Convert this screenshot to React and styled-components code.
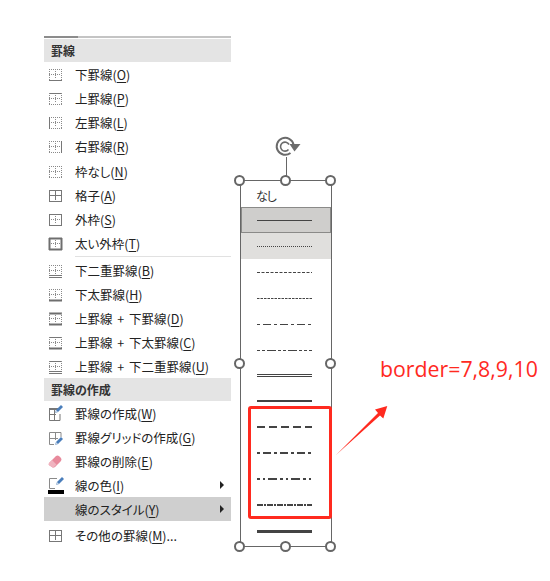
import React from "react";
import styled, { createGlobalStyle } from "styled-components";

const GlobalStyle = createGlobalStyle`
  html, body {
    margin: 0;
    background: #fff;
  }
`;

const FONT = `"Noto Sans CJK JP", "Noto Sans", sans-serif`;

const BorderIcon = ({ top, bottom, left, right, solid }) => {
  const dotted = { stroke: "#8a8a8a", strokeWidth: 1, strokeDasharray: "1 1" };
  const line = { stroke: "#777", strokeWidth: 1 };
  const thick = { stroke: "#6e6e6e", strokeWidth: 2 };
  const edge = (kind, x1, y1, x2, y2) => {
    if (kind === "thick") return <line x1={x1} y1={y1} x2={x2} y2={y2} {...thick} />;
    if (kind === "thin") return <line x1={x1} y1={y1} x2={x2} y2={y2} {...line} />;
    return <line x1={x1} y1={y1} x2={x2} y2={y2} {...dotted} />;
  };
  return (
    <svg width="16" height="16" viewBox="0 0 16 16" fill="none">
      <line x1="8.5" y1="3" x2="8.5" y2="13" {...(solid ? line : dotted)} />
      <line x1="2" y1="8.5" x2="14" y2="8.5" {...(solid ? line : dotted)} />
      {edge(top, 2, 3.5, 15, 3.5)}
      {bottom !== "double" && edge(bottom, 2, 14.5, 15, 14.5)}
      {edge(left, 2.5, 3, 2.5, 15)}
      {edge(right, 14.5, 3, 14.5, 15)}
      {bottom === "double" && (
        <>
          <line x1="2" y1="13.5" x2="15" y2="13.5" {...line} />
          <line x1="2" y1="15.5" x2="15" y2="15.5" {...line} />
        </>
      )}
    </svg>
  );
};

const Pencil = ({ x = 0, y = 0 }) => (
  <g transform={`translate(${x} ${y})`}>
    <path d="M0 8 L1 5 L6 0 L8 2 L3 7 Z" fill="#4a7ebb" />
    <path d="M0 8 L1 5 L3 7 Z" fill="#c9d6e6" />
  </g>
);

const DrawIcon = () => (
  <svg width="16" height="16" viewBox="0 0 16 16" fill="none">
    <path d="M2.5 3.5 H11 M2.5 3.5 V15.5 H13 V9 M7.5 4 V15 M3 9.5 H9" stroke="#777" />
    <rect x="2" y="3" width="9" height="2" fill="#777" />
    <Pencil x={8} y={0} />
  </svg>
);

const GridDrawIcon = () => (
  <svg width="16" height="16" viewBox="0 0 16 16" fill="none">
    <path d="M2.5 3.5 H14 V8 M2.5 3.5 V15.5 H7 M8.5 4 V11 M3 9.5 H11" stroke="#8a8a8a" />
    <Pencil x={8} y={8} />
  </svg>
);

const EraserIcon = () => (
  <svg width="16" height="16" viewBox="0 0 16 16">
    <path d="M2 10 L9 3 Q10.5 2 12 3 L14 5 Q15 6.5 14 8 L8 14 Q6 15 5 14 L2.5 12.5 Q1 11.5 2 10 Z" fill="#e88a9c" />
    <path d="M2 10 L5 7 L9.5 11.5 L7 14 Q6 15 5 14 L2.5 12.5 Q1 11.5 2 10 Z" fill="#f0b3bf" />
  </svg>
);

const ColorIcon = () => (
  <svg width="18" height="18" viewBox="0 0 18 18" fill="none">
    <path d="M2.5 12.5 V2.5 H10" stroke="#8a8a8a" strokeWidth="1" />
    <path d="M2.5 12.5 H8" stroke="#8a8a8a" strokeWidth="1" />
    <Pencil x={9} y={1} />
    <rect x="1" y="14" width="16" height="4" fill="#000" />
  </svg>
);

const RotateIcon = () => (
  <RotateSvg width="24" height="22" viewBox="0 0 24 22" fill="none">
    <path d="M16.5 18 A8.5 8.5 0 1 1 19.5 9.5" stroke="#6b6b6b" strokeWidth="2" />
    <path d="M14.5 14.5 A4.5 4.5 0 1 1 15 9.5" stroke="#6b6b6b" strokeWidth="1.6" />
    <path d="M15.5 9 L26.5 9 L20.5 16.5 Z" fill="#6b6b6b" />
  </RotateSvg>
);

const sections = [
  {
    title: "罫線",
    groups: [
      [
        { label: "下罫線", key: "O", icon: <BorderIcon bottom="thin" /> },
        { label: "上罫線", key: "P", icon: <BorderIcon top="thin" /> },
        { label: "左罫線", key: "L", icon: <BorderIcon left="thin" /> },
        { label: "右罫線", key: "R", icon: <BorderIcon right="thin" /> },
      ],
      [
        { label: "枠なし", key: "N", icon: <BorderIcon /> },
        { label: "格子", key: "A", icon: <BorderIcon solid top="thin" bottom="thin" left="thin" right="thin" /> },
        { label: "外枠", key: "S", icon: <BorderIcon top="thin" bottom="thin" left="thin" right="thin" /> },
        { label: "太い外枠", key: "T", icon: <BorderIcon top="thick" bottom="thick" left="thick" right="thick" /> },
      ],
      [
        { label: "下二重罫線", key: "B", icon: <BorderIcon bottom="double" /> },
        { label: "下太罫線", key: "H", icon: <BorderIcon bottom="thick" /> },
        { label: "上罫線 + 下罫線", key: "D", icon: <BorderIcon top="thick" bottom="thick" /> },
        { label: "上罫線 + 下太罫線", key: "C", icon: <BorderIcon top="thin" bottom="thick" /> },
        { label: "上罫線 + 下二重罫線", key: "U", icon: <BorderIcon top="thin" bottom="double" /> },
      ],
    ],
  },
  {
    title: "罫線の作成",
    groups: [
      [
        { label: "罫線の作成", key: "W", icon: <DrawIcon /> },
        { label: "罫線グリッドの作成", key: "G", icon: <GridDrawIcon /> },
        { label: "罫線の削除", key: "E", icon: <EraserIcon /> },
        { label: "線の色", key: "I", icon: <ColorIcon />, more: true },
        { label: "線のスタイル", key: "Y", active: true, more: true },
      ],
    ],
  },
];

const lineStyles = [
  { width: 1, dash: "" },
  { width: 1, dash: "1 1" },
  { width: 1, dash: "3 1.5" },
  { width: 1, dash: "2.5 1" },
  { width: 1, dash: "3 3 8 3" },
  { width: 1, dash: "3 2 3 2 9 2" },
  { double: true },
  { width: 2, dash: "" },
  { width: 2, dash: "8 4" },
  { width: 2, dash: "3 3 8 3" },
  { width: 2, dash: "3 3 2 3 9 3" },
  { width: 2, dash: "6 1 2 1" },
  { width: 3, dash: "" },
];

const LineSample = ({ width, dash, double }) => {
  const y = width === 1 ? 3.5 : width === 3 ? 2.5 : 2;
  return (
    <SampleSvg width="55" height="6" viewBox="0 0 55 6">
      {double ? (
        <>
          <line x1="0" y1="1.5" x2="55" y2="1.5" stroke="#444" />
          <line x1="0" y1="3.5" x2="55" y2="3.5" stroke="#444" />
        </>
      ) : (
        <line x1="0" y1={y} x2="55" y2={y} stroke="#444" strokeWidth={width} strokeDasharray={dash} />
      )}
    </SampleSvg>
  );
};

const MenuRow = ({ item }) => (
  <Row $active={item.active}>
    <IconSlot>{item.icon}</IconSlot>
    <Label>
      {item.label}(<u>{item.key}</u>)
    </Label>
    {item.more && <SubArrow />}
  </Row>
);

const App = () => {
  return (
    <Page>
      <GlobalStyle />
      <Menu>
        <TopEdge />
        {sections.map((section) => (
          <section key={section.title}>
            <Header>{section.title}</Header>
            {section.groups.map((group, index) => (
              <Group key={index} $first={index === 0}>
                {group.map((item) => (
                  <MenuRow key={item.key} item={item} />
                ))}
              </Group>
            ))}
          </section>
        ))}
        <LastRow>
          <IconSlot>
            <BorderIcon solid top="thin" bottom="thin" left="thin" right="thin" />
          </IconSlot>
          <Label>
            その他の罫線(<u>M</u>)...
          </Label>
        </LastRow>
      </Menu>

      <ShapeColumn>
        <RotateIcon />
        <Stem />
        <Panel>
          <NoneRow>なし</NoneRow>
          {lineStyles.map((style, index) => (
            <StyleRow key={index} $selected={index === 0} $hover={index === 1}>
              <LineSample {...style} />
            </StyleRow>
          ))}
          <Handle $x="-1px" $y="0" />
          <Handle $x="50%" $y="0" />
          <Handle $x="100%" $y="0" />
          <Handle $x="-1px" $y="50%" />
          <Handle $x="100%" $y="50%" />
          <Handle $x="-1px" $y="calc(100% + 1px)" />
          <Handle $x="50%" $y="calc(100% + 1px)" />
          <Handle $x="100%" $y="calc(100% + 1px)" />
          <RedBox />
        </Panel>
      </ShapeColumn>

      <Callout>border=7,8,9,10</Callout>
      <ArrowSvg width="60" height="60" viewBox="0 0 60 60">
        <path d="M6 55 L48 13 L45 9.5 L57.3 6 L53.3 18.5 L50 15.5 Z" fill="#ff2a1f" />
      </ArrowSvg>
    </Page>
  );
};

export default App;

const Page = styled.div`
  position: relative;
  display: flex;
  align-items: flex-start;
  width: 550px;
  height: 581px;
  padding-left: 44px;
  box-sizing: border-box;
  overflow: hidden;
  font-family: ${FONT};
  color: #222;
`;

const Menu = styled.div`
  width: 187px;
  margin-top: 36px;
  font-size: 12.5px;
  font-feature-settings: "palt";
`;

const TopEdge = styled.div`
  height: 2px;
  margin-bottom: 1px;
  background: linear-gradient(to right, #8c8c8c 34px, #c4c4c4 34px);
`;

const Header = styled.div`
  height: 23px;
  padding-left: 7px;
  line-height: 24px;
  font-weight: 700;
  font-size: 12px;
  background: #e4e4e4;
  color: #333;
`;

const Group = styled.div`
  padding-top: ${(p) => (p.$first ? "0" : "1px")};

  section:first-of-type > &:first-of-type {
    margin-top: 2px;
  }

  & + &::before {
    content: "";
    display: block;
    height: 1px;
    margin: 0 0 1px 31px;
    background: #e1e1e1;
  }
`;

const Row = styled.div`
  position: relative;
  display: flex;
  align-items: center;
  height: 24px;
  background: ${(p) => (p.$active ? "#cfcfcf" : "transparent")};
`;

const LastRow = styled(Row)`
  margin-top: 2px;
`;

const IconSlot = styled.div`
  display: flex;
  align-items: center;
  justify-content: flex-start;
  width: 28px;
  margin-left: 3px;
  height: 100%;
`;

const Label = styled.span`
  padding-top: 2px;
  white-space: nowrap;
  word-spacing: 2px;
  line-height: 1;

  u {
    text-underline-offset: 2px;
  }
`;

const SubArrow = styled.i`
  position: absolute;
  right: 7px;
  top: 8px;
  border-left: 4px solid #222;
  border-top: 4px solid transparent;
  border-bottom: 4px solid transparent;
`;

const ShapeColumn = styled.div`
  display: flex;
  flex-direction: column;
  align-items: center;
  width: 92px;
  margin-left: 9px;
  margin-top: 135px;
`;

const RotateSvg = styled.svg`
  display: block;
  overflow: visible;
`;

const Stem = styled.div`
  width: 1px;
  height: 23px;
  background: #666;
`;

const Panel = styled.div`
  position: relative;
  box-sizing: border-box;
  width: 92px;
  height: 367px;
  border: 1px solid #666;
  background: #fff;
`;

const NoneRow = styled.div`
  height: 26px;
  padding-left: 15px;
  font-size: 12px;
  font-feature-settings: "palt";
  letter-spacing: -1px;
  line-height: 29px;
  color: #333;
`;

const StyleRow = styled.div`
  display: flex;
  align-items: center;
  height: 26px;
  padding-left: 16px;
  background: ${(p) => (p.$selected ? "#cfcecc" : p.$hover ? "#e0dfdd" : "transparent")};
  box-shadow: ${(p) => (p.$selected ? "inset 0 0 0 1px #8a8a88" : "none")};
`;

const SampleSvg = styled.svg`
  display: block;
`;

const Handle = styled.span`
  position: absolute;
  left: ${(p) => p.$x};
  top: ${(p) => p.$y};
  box-sizing: border-box;
  width: 11px;
  height: 11px;
  margin: -6px 0 0 -6px;
  border: 2px solid #666;
  border-radius: 50%;
  background: #fff;
`;

const RedBox = styled.div`
  position: absolute;
  left: 7px;
  top: 225px;
  box-sizing: border-box;
  width: 84px;
  height: 113px;
  border: 3px solid #ff2a1f;
  border-radius: 3px;
`;

const Callout = styled.div`
  position: absolute;
  left: 380px;
  top: 354px;
  font-family: "Open Sans", "Noto Sans", sans-serif;
  font-size: 21.3px;
  line-height: 30px;
  color: #ff2a1f;
  white-space: nowrap;
`;

const ArrowSvg = styled.svg`
  position: absolute;
  left: 330px;
  top: 400px;
`;
